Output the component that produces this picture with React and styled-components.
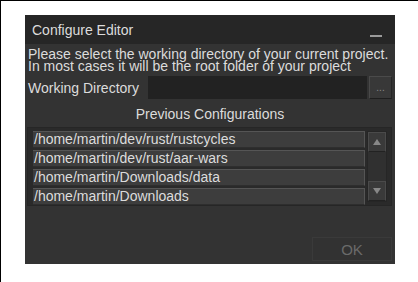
import styled, { createGlobalStyle } from 'styled-components'

const Global = createGlobalStyle`
    body {
        margin: 0;
        background: #ffffff;
        font-family: "Liberation Sans", Arial, sans-serif;
    }
`

const Page = styled.div`
    width: 418px;
    height: 282px;
    box-sizing: border-box;
    border-top: 1px solid #000;
    border-left: 1px solid #000;
    padding: 14px 0 0 24px;
`
const Window = styled.div`
    width: 370px;
    height: 249px;
    background-color: #333333;
    display: flex;
    flex-direction: column;
    color: #dcdcdc;
    font-size: 14px;
`
const TitleBar = styled.div`
    height: 29px;
    background-color: #262626;
    display: flex;
    align-items: center;
    justify-content: space-between;
    padding: 0 13px 0 7px;
`
const Minimize = styled.span`
    width: 12px;
    height: 2px;
    margin-top: 12px;
    background-color: #9a9a9a;
`
const Body = styled.div`
    flex: 1;
    display: flex;
    flex-direction: column;
    padding: 4px 3px 3px 3px;
`
const Intro = styled.p`
    margin: 0;
    line-height: 12px;
`
const Row = styled.div`
    display: flex;
    align-items: center;
    margin-top: 4px;
    height: 23px;
`
const Label = styled.span`
    width: 120px;
`
const Field = styled.div`
    flex: 1;
    height: 23px;
    background-color: #222222;
`
const SmallButton = styled.button`
    width: 23px;
    height: 23px;
    margin-left: 2px;
    padding: 0;
    border: 1px solid #4a4a4a;
    border-bottom-color: #1e1e1e;
    border-right-color: #262626;
    background-color: #383838;
    color: #888;
    font-size: 10px;
    font-family: inherit;
`
const Heading = styled.div`
    text-align: center;
    margin-top: 5px;
    height: 20px;
    line-height: 20px;
`
const ListBox = styled.div`
    margin: 3px 0 0 -1px;
    width: 365px;
    height: 79px;
    box-sizing: border-box;
    background-color: #2a2a2a;
    border: 1px solid #262626;
    display: flex;
    padding: 3px 4px 0 5px;
    overflow: hidden;
`
const Items = styled.div`
    flex: 1;
    display: flex;
    flex-direction: column;
    gap: 2px;
`
const Item = styled.div`
    flex: none;
    height: 17px;
    box-sizing: border-box;
    background-color: #3d3d3d;
    border-top: 1px solid #555555;
    border-right: 1px solid #555555;
    border-bottom: 1px solid #2e2e2e;
    padding-left: 1px;
    font-size: 14px;
    white-space: nowrap;
    line-height: 15px;
    overflow: hidden;
`
const ScrollBar = styled.div`
    width: 20px;
    margin-left: 2px;
    height: 71px;
    display: flex;
    flex-direction: column;
    justify-content: space-between;
    background-color: #303030;
    border: 1px solid #262626;
    box-sizing: border-box;
`
const Arrow = styled.div`
    height: 20px;
    background-color: #3a3a3a;
    border: 1px solid #4a4a4a;
    border-bottom-color: #222;
    box-sizing: border-box;
    display: flex;
    align-items: center;
    justify-content: center;
`
const Triangle = styled.span`
    width: 0;
    height: 0;
    border-left: 4px solid transparent;
    border-right: 4px solid transparent;
    ${p => p.$down
        ? 'border-top: 6px solid #888;'
        : 'border-bottom: 6px solid #888;'}
`
const Footer = styled.div`
    margin-top: auto;
    display: flex;
    justify-content: flex-end;
`
const OkButton = styled.button`
    width: 80px;
    height: 24px;
    background-color: #323232;
    border: 1px solid #3a3a3a;
    color: #6a6a6a;
    font-family: inherit;
    font-size: 15px;
    padding: 0;
`

const paths = [
    '/home/martin/dev/rust/rustcycles',
    '/home/martin/dev/rust/aar-wars',
    '/home/martin/Downloads/data',
    '/home/martin/Downloads',
]

export default function App() {
    return (
        <>
            <Global />
            <Page>
                <Window>
                    <TitleBar>
                        <span>Configure Editor</span>
                        <Minimize />
                    </TitleBar>
                    <Body>
                        <Intro>
                            Please select the working directory of your current project.<br />
                            In most cases it will be the root folder of your project
                        </Intro>
                        <Row>
                            <Label>Working Directory</Label>
                            <Field />
                            <SmallButton>...</SmallButton>
                        </Row>
                        <Heading>Previous Configurations</Heading>
                        <ListBox>
                            <Items>
                                {paths.map(p => <Item key={p}>{p}</Item>)}
                            </Items>
                            <ScrollBar>
                                <Arrow><Triangle /></Arrow>
                                <Arrow><Triangle $down /></Arrow>
                            </ScrollBar>
                        </ListBox>
                        <Footer>
                            <OkButton disabled>OK</OkButton>
                        </Footer>
                    </Body>
                </Window>
            </Page>
        </>
    )
}
